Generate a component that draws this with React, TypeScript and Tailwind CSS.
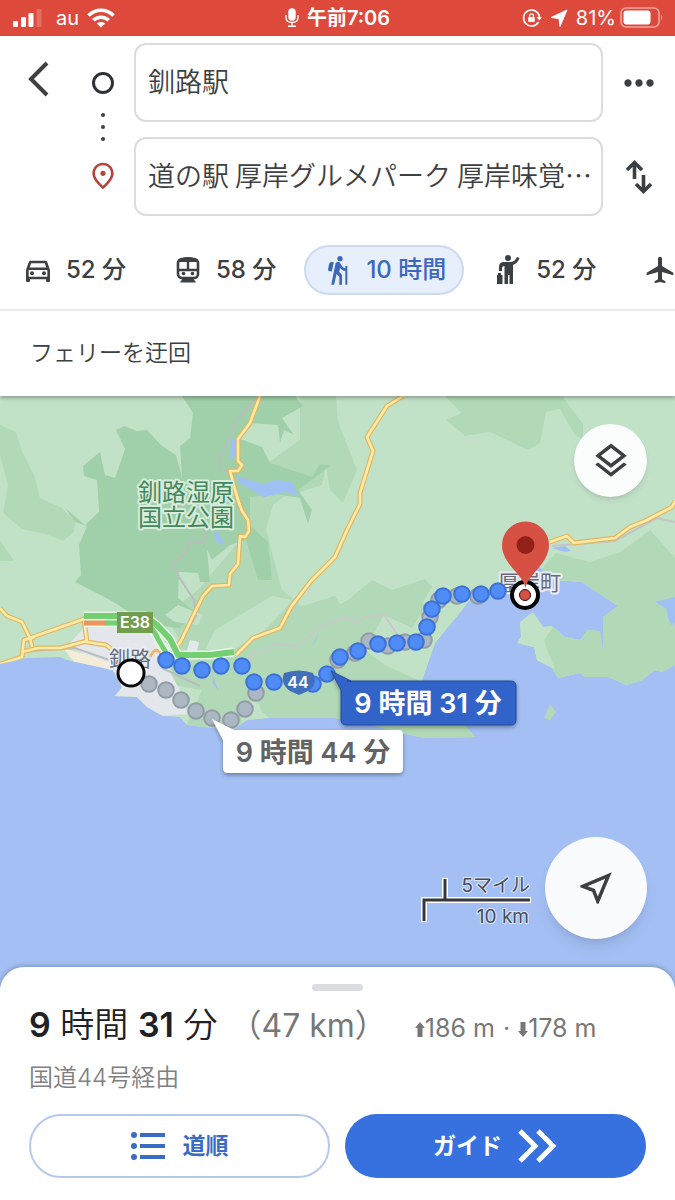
import type { ReactNode } from "react";
import {
  MdAirplanemodeActive,
  MdHiking,
  MdMoreHoriz,
  MdOutlineDirectionsCar,
  MdOutlineLayers,
  MdOutlineNearMe,
  MdOutlinePlace,
} from "react-icons/md";

type Point = [number, number];

const blueDots: Point[] = [
  [166, 660], [182, 666], [202, 670], [221, 666], [242, 666], [254, 682], [274, 682],
  [313, 684], [327, 674], [340, 657], [358, 651], [378, 644], [397, 643], [416, 642],
  [427, 627], [432, 609], [443, 596], [462, 594], [481, 594], [498, 591],
];

const grayDots: Point[] = [
  [149, 684], [166, 690], [181, 700], [196, 711], [212, 718], [231, 720], [245, 709], [256, 693],
  [338, 660], [355, 653], [369, 641], [388, 646], [405, 642], [424, 640], [430, 617], [439, 600],
  [457, 596], [478, 596],
];

const roads = [
  "M260 396 L250 423 L238 439 L238 461 L242 465 L238 471 L230 471 L235 490 L239 503 L242 511 L248 520 L249 531 L245 537 L240 536 L238 564 L230 574 L229 585 L212 586 L203 596 L194 614 L181 641 L172 654",
  "M403 396 L387 406 L367 437 L373 451 L360 493 L360 504 L347 530 L335 557 L311 581 L291 607 L280 628 L253 638 L236 655",
  "M0 608 L7 616 L22 622 L30 638 L32 647",
  "M0 664 L22 657 L24 640 L84 619 L87 642 L106 645 L120 655 M24 640 L35 637 M22 652 L38 648 L60 648 L87 641",
  "M550 542 L567 536 L574 543 L615 538 L630 527 L645 521 L672 507 L675 501",
];

const tabs: { label: string; icon: ReactNode; active?: boolean }[] = [
  { label: "52 分", icon: <MdOutlineDirectionsCar className="size-8" /> },
  { label: "58 分", icon: <TrainIcon /> },
  { label: "10 時間", icon: <MdHiking className="size-8" />, active: true },
  { label: "52 分", icon: <HailIcon /> },
];

function TrainIcon() {
  return (
    <svg viewBox="0 0 24 28" className="h-7 w-6" fill="none" stroke="currentColor">
      <rect x="2" y="3" width="20" height="19" rx="4" strokeWidth="2.6" />
      <path d="M2 14 H22 M12 5 V14" strokeWidth="2.4" />
      <path d="M3 6 Q4 1 12 1 Q20 1 21 6 Z" fill="currentColor" stroke="none" />
      <circle cx="7.5" cy="17.5" r="1.8" fill="currentColor" stroke="none" />
      <circle cx="16.5" cy="17.5" r="1.8" fill="currentColor" stroke="none" />
      <path d="M7 22 L4 26.5 H20 L17 22 Z" fill="currentColor" stroke="none" />
    </svg>
  );
}

function HailIcon() {
  return (
    <svg viewBox="0 0 24 30" className="h-[30px] w-6" fill="currentColor">
      <circle cx="12" cy="3" r="3" />
      <path d="M3 16 V12 Q3 7 8 7 H14 Q19 7 21 2 L23.500 3 Q22 8 17 10 V29 H13.500 V20 H12 V29 H8.500 V11 Q6 11 6 13 V16 Z" />
      <path d="M1 20 H2 V18 H5 V20 H6.500 V29 H1 Z" />
    </svg>
  );
}

function StatusBar() {
  return (
    <div className="grid h-9 grid-cols-3 items-center bg-[#dd4a3c] px-3 text-xl text-white">
      <div className="flex items-center gap-3">
        <svg viewBox="0 0 30 20" className="h-5 w-8" fill="currentColor">
          <rect x="0" y="13" width="5" height="6" rx="1" />
          <rect x="8" y="9" width="5" height="10" rx="1" />
          <rect x="15.5" y="5" width="5" height="14" rx="1" />
          <rect x="23.5" y="1" width="5" height="18" rx="1" opacity="0.2" />
        </svg>
        <span>au</span>
        <svg viewBox="0 0 28 20" className="-ml-1 h-5 w-7" fill="none" stroke="currentColor" strokeWidth="3.6">
          <path d="M1.5 7.5 C8.5 0.5 19.5 0.5 26.5 7.5" />
          <path d="M6.3 12.3 C10.5 8.2 17.5 8.2 21.7 12.3" />
          <path d="M14 19.5 L9.8 15.4 C12.2 13.4 15.8 13.4 18.2 15.4 Z" fill="currentColor" stroke="none" />
        </svg>
      </div>
      <div className="flex items-center justify-center gap-2 font-semibold">
        <svg viewBox="0 0 14 20" className="h-5 w-[14px]" fill="none" stroke="currentColor" strokeWidth="1.4">
          <rect x="4" y="1" width="6" height="11" rx="3" fill="currentColor" />
          <path d="M1 7 V9.500 Q1 14.500 7 14.500 Q13 14.500 13 9.500 V7 M7 15 V18 M3 18.300 H11" />
        </svg>
        <span>午前7:06</span>
      </div>
      <div className="flex items-center justify-end gap-2">
        <svg viewBox="0 0 20 20" className="size-5" fill="none" stroke="currentColor" strokeWidth="1.6">
          <path d="M16.5 14 A8 8 0 1 1 17.5 9" />
          <path d="M14.6 9 H20 L17.4 12.5 Z" fill="currentColor" stroke="none" />
          <rect x="6.2" y="9" width="6.6" height="5" rx="0.8" fill="currentColor" stroke="none" />
          <path d="M7.6 9.5 V7.8 A1.9 1.9 0 0 1 11.4 7.8 V9.5" strokeWidth="1.3" />
        </svg>
        <svg viewBox="0 0 18 18" className="size-[18px]" fill="currentColor">
          <path d="M17 1 L10 17.5 L9 9.5 L1 8.5 Z" stroke="currentColor" strokeLinejoin="round" />
        </svg>
        <span className="flex items-center gap-1">
          81%
          <svg viewBox="0 0 43 22" className="h-[22px] w-[43px]" fill="none">
            <rect x="1" y="1" width="38" height="19" rx="5" stroke="#f0a59d" strokeWidth="1.6" />
            <rect x="3.5" y="3.5" width="27" height="14" rx="3" fill="white" />
            <path d="M41 7.5 Q43.5 10.5 41 13.5 Z" fill="#f0a59d" />
          </svg>
        </span>
      </div>
    </div>
  );
}

function SearchForm() {
  const field =
    "col-start-3 h-[79px] w-full min-w-0 rounded-xl border-2 border-[#dcdcdc] bg-white pr-1 pb-1 pl-3 font-['Noto_Sans_CJK_JP',sans-serif] text-[27px] font-[350] text-ellipsis text-[#3c4043] outline-none";
  return (
    <form className="grid grid-cols-[72px_62px_1fr_72px] grid-rows-2 items-center gap-y-[15px] pt-[7px]">
      <button type="button" aria-label="戻る" className="flex justify-center pb-2 pl-1">
        <svg viewBox="0 0 22 36" className="h-9 w-[22px]" fill="none" stroke="#3c4043" strokeWidth="4">
          <path d="M20 2 L4 18 L20 34" />
        </svg>
      </button>
      <div className="row-span-2 flex h-full flex-col items-center justify-between pt-[29px] pb-6">
        <span className="size-[22px] rounded-full border-3 border-[#2f3234]" />
        <svg viewBox="0 0 4 28" className="h-7 w-1" fill="#3c4043">
          <circle cx="2" cy="2" r="2" />
          <circle cx="2" cy="14" r="2" />
          <circle cx="2" cy="26" r="2" />
        </svg>
        <MdOutlinePlace className="size-8 text-[#b8433a]" />
      </div>
      <input className={field} aria-label="出発地" defaultValue="釧路駅" />
      <button type="button" aria-label="その他" className="flex justify-center">
        <MdMoreHoriz className="size-11 text-[#3c4043]" />
      </button>
      <input className={field} aria-label="目的地" defaultValue="道の駅 厚岸グルメパーク 厚岸味覚…" />
      <button type="button" aria-label="入れ替え" className="flex justify-center">
        <svg viewBox="0 0 28 36" className="h-9 w-7" fill="none" stroke="#3c4043" strokeWidth="3.6">
          <path d="M9.5 20 V4 M2 11 L9.5 3.5 L17 11" />
          <path d="M18.5 16 V32 M11 25 L18.5 32.5 L26 25" />
        </svg>
      </button>
    </form>
  );
}

function TravelModes() {
  return (
    <nav className="flex items-center gap-[10px] overflow-hidden border-b-2 border-[#e8eaed] py-[14px] pt-[29px] pl-1 text-2xl font-medium whitespace-nowrap">
      {tabs.map((tab, i) => (
        <button
          key={i}
          type="button"
          className={
            tab.active
              ? "flex h-[50px] shrink-0 items-center gap-3 rounded-full border-2 border-[#cddaf0] bg-[#e8effc] px-4 text-[#3b68bc]"
              : "flex h-[50px] shrink-0 items-center gap-3 rounded-full border-2 border-transparent px-4 text-[#3c4043]"
          }
        >
          <span className="flex w-8 justify-center">{tab.icon}</span>
          {tab.label}
        </button>
      ))}
      <button type="button" aria-label="飛行機" className="shrink-0 pl-5 text-[#3c4043]">
        <MdAirplanemodeActive className="size-8" />
      </button>
    </nav>
  );
}

function Dots({ points, fill, stroke }: { points: Point[]; fill: string; stroke: string }) {
  return (
    <g fill={fill} stroke={stroke} strokeWidth="2">
      {points.map(([x, y]) => (
        <circle key={`${x}-${y}`} cx={x} cy={y} r="7.8" />
      ))}
    </g>
  );
}

function RouteMap() {
  return (
    <svg viewBox="0 396 675 591" className="block w-full bg-[#a3bff4]">
      <defs>
        <filter id="drop" x="-20%" y="-20%" width="140%" height="150%">
          <feDropShadow dx="0" dy="2" stdDeviation="2" floodOpacity="0.35" />
        </filter>
        <clipPath id="land">
          <path d="M0 396 H675 V665 L662 672 L655 670 L642 680 L627 685 L608 677 L585 677 L580 673 L558 678 L552 668 L537 660 L534 647 L517 643 L521 637 L520 622 L533 612 L543 627 L552 626 L565 637 L580 640 L588 630 L600 631 L603 652 L603 617 L618 606 L598 593 L582 582 L552 580 L538 565 L525 584 L500 585 L472 597 L462 610 L435 643 L422 680 L440 705 L465 725 L475 737 L425 738 L402 733 L372 725 L335 718 L267 718 L247 720 L233 730 L213 728 L187 725 L180 717 L163 716 L147 707 L137 697 L115 696 L122 687 L113 670 L90 665 L67 660 L60 657 L27 658 L0 664 Z" />
        </clipPath>
      </defs>

      <g clipPath="url(#land)">
        <rect y="396" width="675" height="400" fill="#c2e2c8" />
        <g fill="#b2d9b7">
          <path d="M0 425 L16 432 L22 451 L34 475 L40 498 L62 508 L75 522 L74 532 L63 541 L45 534 L22 529 L3 513 L8 485 L0 455 Z" />
          <path d="M0 540 L14 561 H0 Z" />
          <path d="M300 396 H336 L338 422 L357 470 L343 503 L330 490 L326 466 L322 485 L300 492 L283 497 L273 505 L266 530 L274 560 L282 590 L302 606 L335 596 L340 604 L316 625 L290 650 L262 660 L255 640 L282 612 L292 600 L272 596 L215 630 L200 660 L180 640 L166 618 L185 600 L198 590 L240 540 L250 470 L272 460 L300 440 Z" />
          <path d="M445 396 L461 413 L446 420 L465 436 L490 432 L528 450 L540 443 L546 412 L560 409 L575 435 L583 440 V424 L562 396 Z" />
          <path d="M335 607 L348 600 L372 580 L392 590 L425 579 L432 587 L422 604 H470 L440 650 L422 682 L372 655 L335 650 L300 672 L320 740 H480 V705 L422 680 L350 670 L300 690 L262 725 L240 685 L200 690 L150 680 L165 640 L235 655 L290 645 Z" />
          <path d="M215 660 L250 640 L335 625 L384 615 L430 640 L500 740 H180 Z" />
          <path d="M545 565 L556 553 L590 562 L620 552 L650 530 L675 558 V690 H558 L544 640 L552 626 L565 637 L590 600 L540 575 Z" />
        </g>
        <path
          d="M182 396 L193 413 L190 438 L180 446 L182 478 L176 455 L161 445 L147 430 L137 431 L124 426 L116 430 L125 449 L115 478 L105 475 L100 452 L83 466 L84 476 L97 480 L99 512 L85 525 L65 508 L75 522 L87 526 L79 545 L81 575 L75 582 L110 600 L150 625 L180 628 L195 612 L178 598 L179 572 L198 573 L200 582 H210 L207 550 L212 560 L230 545 L246 540 L258 580 L272 580 L268 542 L250 525 L250 497 L276 494 L300 498 L308 524 L312 510 L298 490 L330 466 L320 464 L312 477 L270 463 L262 447 L240 439 L250 423 L278 425 L280 443 L284 430 L294 435 L282 418 L303 406 L295 396 Z"
          fill="#a0d0a9"
        />
        <path d="M384 615 L412 628 L425 608 L470 600 L435 650 L422 682 L385 665 L365 650 Z" fill="#c2e2c8" />
        <path d="M530 610 L553 628 L543 640 L555 669 L537 662 L510 640 Z" fill="#c2e2c8" />
        <path d="M165 615 L178 605 L203 615 L198 625 L175 622 Z" fill="#c2e2c8" />
        <path d="M240 715 L255 695 L262 712 L275 722 L245 730 Z" fill="#c2e2c8" />
        <path d="M68 645 L84 628 L120 626 L150 630 L172 648 L170 672 L185 700 L187 714 L160 716 L110 700 L113 670 Z M190 640 L199 642 L196 656 L186 654 Z" fill="#e3e7ec" />
        <path d="M63 648 L88 655 L110 663 L115 672 L90 666 L74 662 Z" fill="#f4ecd8" />
        <g fill="#a0bff5">
          <path d="M231 439 L235 437 L236 455 L230 461 Z" />
          <path d="M236 476 L252 481 L264 484 L275 480 L292 482 L298 496 L286 492 L264 497 L240 483 Z" />
          <path d="M213 530 L219 534 L225 546 L217 542 Z" />
          <path d="M552 548 L565 546 L571 551 L565 552 Z" />
          <path d="M675 597 L655 602 L667 609 L668 618 L672 626 L675 622 Z" />
          <path d="M212 674 L219 691 L213 684 Z M312 646 L319 633 L315 642 Z M164 568 L155 580 L153 582 Z" />
        </g>

        <g fill="none" stroke="#b9bdc0" strokeWidth="2">
          <path d="M258 396 L236 421 L219 460 L220 469 L230 471 L234 488" />
          <path d="M203 528 L207 537 L203 543 L190 541 L185 554 L173 563 L179 577 L194 600 L196 616 L181 641" />
          <path d="M30 651 L75 648 L112 661 M162 668 L200 686" />
          <path d="M250 662 L253 652 L265 651 L275 644 L295 646 L312 635 L318 628 L345 617 L357 622 L366 617 L384 615 L397 634" stroke="#c7c9c9" />
          <path d="M552 546 L615 541 L657 518 L675 522" stroke="#c5c4c9" />
        </g>

        <g fill="none" strokeLinejoin="round">
          {roads.map((d) => (
            <path key={d} d={d} stroke="#dfb761" strokeWidth="5" />
          ))}
          {roads.map((d) => (
            <path key={d} d={d} stroke="#fdeaa6" strokeWidth="2.6" />
          ))}
          <path d="M150 657 Q157 642 164 660" stroke="#eeb567" strokeWidth="3" />
          <path d="M84 616 H145 L158 626 L170 639 L178 655 H210 L234 652 M84 623 H140 Q151 623 158 639 L168 656" stroke="#e8f7e5" strokeWidth="9" />
          <path d="M84 616 H145 L158 626 L170 639 L178 655 H210 L234 652" stroke="#73cf71" strokeWidth="6" />
          <path d="M105 623 H140 Q151 623 158 639 L168 656" stroke="#73cf71" strokeWidth="5" />
          <path d="M84 623 H106" stroke="#ed935e" strokeWidth="5" />
        </g>
      </g>
      <path d="M550 704 L556 712 L550 720 L544 718 Z" fill="#b2d9b7" />

      <g className="font-['Noto_Sans_CJK_JP',sans-serif]" strokeLinejoin="round" paintOrder="stroke">
        <g fontSize="24" fill="#44875c" stroke="#d8ecdc" strokeWidth="4">
          <text x="138" y="501">釧路湿原</text>
          <text x="138" y="526">国立公園</text>
        </g>
        <g fontSize="21" fill="#686c76" stroke="#e8edf5" strokeWidth="4">
          <text x="109" y="666">釧路</text>
          <text x="498" y="590">厚岸町</text>
        </g>
      </g>

      <Dots points={grayDots} fill="#abb8c3" stroke="#929ca6" />
      <Dots points={blueDots} fill="#508cf5" stroke="#3c72d8" />

      <g className="font-['Inter',sans-serif]" textAnchor="middle" fill="white">
        <rect x="117" y="612" width="36" height="21" fill="#719d4f" />
        <text x="135" y="628" fontSize="16" fontWeight="600">E38</text>
        <path d="M284 673 Q299 668 313 673 Q318 685 308 691 L299 695 L290 691 Q280 684 284 673 Z" fill="#416fb9" />
        <text x="298" y="688" fontSize="16" fontWeight="600">44</text>
      </g>

      <circle cx="131" cy="673" r="13" fill="white" stroke="#080808" strokeWidth="3" />

      <circle cx="525" cy="595" r="13" fill="white" stroke="#050505" strokeWidth="4" />
      <circle cx="525" cy="595" r="5.5" fill="#d65143" stroke="#26100e" strokeWidth="1" />
      <path d="M525.500 588 C523 574 502 564 502 545 A23.500 23.500 0 0 1 549 545 C549 564 528 574 525.500 588 Z" fill="#d65143" />
      <circle cx="525.500" cy="545" r="9" fill="#942119" />

      <g className="font-['Inter','Noto_Sans_CJK_JP',sans-serif]" fontSize="27" fontWeight="600" textAnchor="middle">
        <path d="M347 681 H511 Q516 681 516 686 V720 Q516 725 511 725 H347 Q341 725 341 720 V690 L331 671 L351 681 Z" fill="#3163c9" stroke="#274d9b" filter="url(#drop)" />
        <text x="428" y="713" fill="white">9 時間 31 分</text>
        <path d="M234 730 H399 Q403 730 403 735 V768 Q403 773 399 773 H228 Q223 773 223 768 V740 L212 719 L234 730 Z" fill="white" filter="url(#drop)" />
        <text x="313" y="762" fill="#616365">9 時間 44 分</text>
      </g>

      <g fill="none">
        <path d="M424 922 V900 H531 M445 900 V878" stroke="white" strokeWidth="6" />
        <path d="M424 921 V900 H530 M445 900 V879" stroke="#35383b" strokeWidth="3" />
      </g>
      <g className="font-['Inter','Noto_Sans_CJK_JP',sans-serif]" fontSize="19" textAnchor="end" fill="#454b57" stroke="#dce7fb" strokeWidth="2" paintOrder="stroke">
        <text x="530" y="892">5マイル</text>
        <text x="529" y="923">10 km</text>
      </g>
    </svg>
  );
}

function RouteSheet() {
  return (
    <section className="relative -mt-5 flex-1 rounded-t-3xl bg-white px-[29px] pt-[17px] pb-[21px] shadow-[0_-1px_5px_rgba(0,0,0,0.25)]">
      <div className="mx-auto h-[7px] w-[51px] rounded-full bg-[#dadce0]" />
      <div className="mt-[10px] flex items-baseline leading-[48px] whitespace-nowrap">
        <h1 className="text-[34px] font-[350] text-[#202124]">
          <b className="font-semibold">9</b> 時間 <b className="font-semibold">31</b> 分
        </h1>
        <span className="ml-3 text-[32px] text-[#777]">（47 km）</span>
        <p className="ml-7 flex items-baseline text-[25px] text-[#777]">
          <svg viewBox="0 0 10 15" className="h-[15px] w-[10px]" fill="#777">
            <path d="M5 0 L10 6 H7.500 V15 H2.500 V6 H0 Z" />
          </svg>
          186 m
          <span className="px-2">·</span>
          <svg viewBox="0 0 10 15" className="h-[15px] w-[10px]" fill="#777">
            <path d="M5 15 L10 9 H7.500 V0 H2.500 V9 H0 Z" />
          </svg>
          178 m
        </p>
      </div>
      <p className="mt-[10px] text-2xl font-[350] text-[#808080]">国道44号経由</p>
      <div className="mt-5 grid grid-cols-2 gap-[15px] text-[23px] font-bold">
        <button type="button" className="flex h-16 items-center justify-center gap-[18px] rounded-full border-2 border-[#b7c9ea] text-[#3b6cc4]">
          <svg viewBox="0 0 34 28" className="h-7 w-[34px]" fill="currentColor">
            <circle cx="3" cy="3" r="3" />
            <circle cx="3" cy="14" r="3" />
            <circle cx="3" cy="25" r="3" />
            <path d="M9 1 H34 V5 H9 Z M9 12 H34 V16 H9 Z M9 23 H34 V27 H9 Z" />
          </svg>
          道順
        </button>
        <button type="button" className="flex h-16 items-center justify-center gap-4 rounded-full bg-[#3671df] text-white">
          ガイド
          <svg viewBox="0 0 40 34" className="h-[34px] w-10" fill="none" stroke="currentColor" strokeWidth="5">
            <path d="M2 2 L17 17 L2 32 M20 2 L35 17 L20 32" />
          </svg>
        </button>
      </div>
    </section>
  );
}

export default function App() {
  return (
    <main className="flex min-h-screen flex-col bg-white font-['Inter','Noto_Sans_CJK_JP',sans-serif]">
      <StatusBar />
      <header className="relative z-10 shadow-[0_2px_4px_rgba(0,0,0,0.3)]">
        <SearchForm />
        <TravelModes />
        <p className="px-[30px] pt-[26px] pb-[27px] text-[23px] leading-8 font-[350] text-[#3c4043]">フェリーを迂回</p>
      </header>
      <div className="relative">
        <RouteMap />
        <button type="button" aria-label="レイヤ" className="absolute top-7 right-7 flex size-[73px] items-center justify-center rounded-full bg-[#fbfdfd] text-[#3c4043] shadow-md">
          <MdOutlineLayers className="size-[42px]" />
        </button>
        <button type="button" aria-label="現在地" className="absolute right-7 bottom-12 flex size-[102px] items-center justify-center rounded-full bg-[#fafbff] text-[#3c4043] shadow-lg">
          <MdOutlineNearMe className="size-[42px]" />
        </button>
      </div>
      <RouteSheet />
    </main>
  );
}
